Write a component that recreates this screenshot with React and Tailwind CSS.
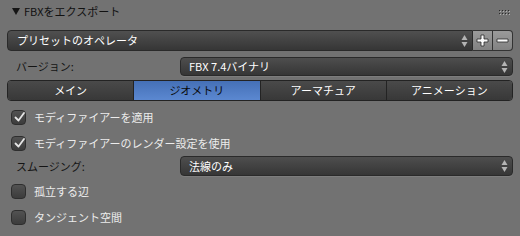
import React from "react";

const font = { fontFamily: '"Noto Sans CJK JP", "Noto Sans", sans-serif' };

function UpDown({ className = "" }) {
  return (
    <svg width="7" height="14" viewBox="0 0 7 14" className={className}>
      <path d="M3.5 1 L6.5 6 L0.5 6 Z" fill="#b4b4b4" />
      <path d="M3.5 13 L6.5 8 L0.5 8 Z" fill="#b4b4b4" />
    </svg>
  );
}

function Check({ checked, label }) {
  return (
    <div className="flex items-center gap-[8px] pl-[4px]">
      <div className="relative h-[15px] w-[15px] rounded-[4px] border border-[#2e2e2e] bg-gradient-to-b from-[#525252] to-[#3c3c3c]">
        {checked && (
          <svg width="13" height="13" viewBox="0 0 13 13" className="absolute left-[1px] top-0">
            <path d="M2.5 6.5 L5.5 9.5 L11 2" fill="none" stroke="#e6e6e6" strokeWidth="1.8" strokeLinecap="round" strokeLinejoin="round" />
          </svg>
        )}
      </div>
      <span className="text-[11px] text-[#ececec]">{label}</span>
    </div>
  );
}

function Dropdown({ value }) {
  return (
    <div className="flex h-full flex-1 items-center justify-between rounded-[4px] border border-[#2a2a2a] bg-gradient-to-b from-[#4e4e4e] to-[#363636] pl-[8px] pr-[4px] shadow-[0_1px_0_rgba(255,255,255,0.08)]">
      <span className="text-[11px] text-white">{value}</span>
      <UpDown />
    </div>
  );
}

export default function App() {
  const tabs = ["メイン", "ジオメトリ", "アーマチュア", "アニメーション"];
  return (
    <div className="h-[236px] w-[520px] overflow-hidden bg-[#727272] px-[7px]" style={font}>
      {/* header */}
      <div className="flex h-[22px] items-center justify-between pl-[5px] pr-[3px]">
        <div className="flex items-center gap-[4px]">
          <svg width="8" height="8" viewBox="0 0 8 8">
            <path d="M0 1 L8 1 L4 8 Z" fill="#151515" />
          </svg>
          <span className="text-[11px] text-[#111]">FBXをエクスポート</span>
        </div>
        <svg width="11" height="6" viewBox="0 0 11 6" className="mt-[4px]">
          {[0, 3, 6, 9].map((x) => (
            <g key={x}>
              <rect x={x} y="0" width="1" height="1" fill="#2a2a2a" />
              <rect x={x + 1} y="1" width="1" height="1" fill="#b0b0b0" />
              <rect x={x} y="3" width="1" height="1" fill="#2a2a2a" />
              <rect x={x + 1} y="4" width="1" height="1" fill="#b0b0b0" />
            </g>
          ))}
        </svg>
      </div>

      {/* preset */}
      <div className="mt-[8px] flex h-[21px]">
        <div className="flex flex-1 items-center justify-between rounded-l-[4px] border border-[#2a2a2a] bg-gradient-to-b from-[#505050] to-[#363636] pl-[9px] pr-[4px]">
          <span className="text-[11px] text-white">プリセットのオペレータ</span>
          <UpDown />
        </div>
        <div className="flex w-[20px] items-center justify-center border-y border-r border-[#333] bg-gradient-to-b from-[#9a9a9a] to-[#828282]">
          <svg width="13" height="13" viewBox="0 0 13 13">
            <path d="M5 1 H8 V5 H12 V8 H8 V12 H5 V8 H1 V5 H5 Z" fill="#fafafa" stroke="#2a2a2a" strokeWidth="0.8" />
          </svg>
        </div>
        <div className="flex w-[20px] items-center justify-center rounded-r-[4px] border-y border-r border-[#333] bg-gradient-to-b from-[#9a9a9a] to-[#828282]">
          <svg width="13" height="13" viewBox="0 0 13 13">
            <path d="M1 5 H12 V8 H1 Z" fill="#fafafa" stroke="#2a2a2a" strokeWidth="0.8" />
          </svg>
        </div>
      </div>

      {/* version */}
      <div className="mt-[6px] flex h-[19px] items-center">
        <span className="w-[173px] pl-[9px] text-[11px] text-[#141414]">バージョン:</span>
        <Dropdown value="FBX 7.4バイナリ" />
      </div>

      {/* tabs */}
      <div className="mt-[4px] flex h-[21px] rounded-[4px] border border-[#232323]">
        {tabs.map((t, i) => (
          <div
            key={t}
            className={`flex flex-1 items-center justify-center text-[11px] ${i > 0 ? "border-l border-[#232323]" : ""} ${i === 0 ? "rounded-l-[3px]" : ""} ${i === 3 ? "rounded-r-[3px]" : ""} ${
              i === 1
                ? "bg-gradient-to-b from-[#4570b6] to-[#5b88d1] text-[#0a0a0a]"
                : "bg-gradient-to-b from-[#4a4a4a] to-[#383838] text-white"
            }`}
          >
            {t}
          </div>
        ))}
      </div>

      <div className="mt-[3px] flex h-[26px] items-center">
        <Check checked label="モディファイアーを適用" />
      </div>
      <div className="flex h-[26px] items-center">
        <Check checked label="モディファイアーのレンダー設定を使用" />
      </div>

      {/* smoothing */}
      <div className="flex h-[20px] items-center">
        <span className="w-[173px] pl-[9px] text-[11px] text-[#141414]">スムージング:</span>
        <Dropdown value="法線のみ" />
      </div>

      <div className="mt-[2px] flex h-[26px] items-center">
        <Check label="孤立する辺" />
      </div>
      <div className="flex h-[27px] items-center">
        <Check label="タンジェント空間" />
      </div>
    </div>
  );
}
